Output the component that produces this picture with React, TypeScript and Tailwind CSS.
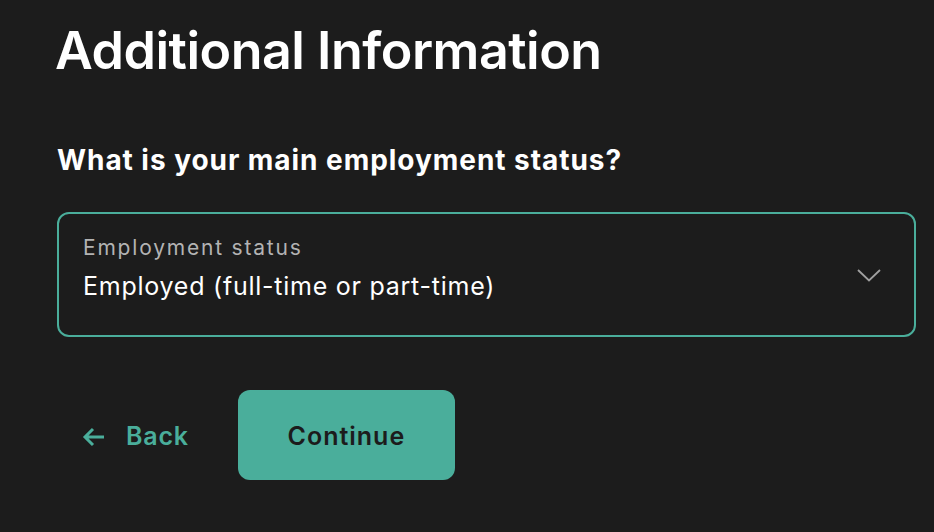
import React from "react";

export default function App() {
  return (
    <div
      className="w-[934px] h-[532px] bg-[#1c1c1c] text-white overflow-hidden"
      style={{ fontFamily: "Inter, 'Noto Sans', sans-serif" }}
    >
      <div className="pl-[55px] pr-[18px] pt-[21px]">
        <h1 className="text-[52px] leading-[60px] font-semibold tracking-[-0.5px]">
          Additional Information
        </h1>
        <h2 className="mt-[62px] pl-[2px] text-[28px] leading-[34px] font-bold tracking-[0.95px]">
          What is your main employment status?
        </h2>
        <div className="mt-[35px] ml-[2px] h-[125px] rounded-[12px] border-2 border-[#4aae9b] flex items-start justify-between pl-[24px] pr-[33px] pt-[21px]">
          <div className="flex flex-col">
            <span className="text-[21px] leading-[26px] text-[#b3b3b3] tracking-[1.8px]">
              Employment status
            </span>
            <span className="text-[25px] leading-[32px] mt-[9px] text-white tracking-[0.75px]">
              Employed (full-time or part-time)
            </span>
          </div>
          <svg width="24" height="13" viewBox="0 0 24 13" fill="none" className="mt-[34px]">
            <path d="M1 1 L12 11.5 L23 1" stroke="#a0a0a0" strokeWidth="1.8" />
          </svg>
        </div>
        <div className="mt-[53px] ml-[2px] flex items-center">
          <button className="flex items-center gap-[21px] pl-[25px] pr-[49px] pt-[4px] text-[#4aae9b] text-[25px] font-semibold tracking-[0.8px]">
            <svg width="23" height="20" viewBox="0 0 23 20" fill="none">
              <path d="M22 10 H3 M11 2 L3 10 L11 18" stroke="#4aae9b" strokeWidth="3" />
            </svg>
            Back
          </button>
          <button className="w-[217px] h-[90px] rounded-[12px] bg-[#4aae9b] text-[#1c1c1c] text-[25px] font-semibold tracking-[1px] pt-[4px]">
            Continue
          </button>
        </div>
      </div>
    </div>
  );
}
